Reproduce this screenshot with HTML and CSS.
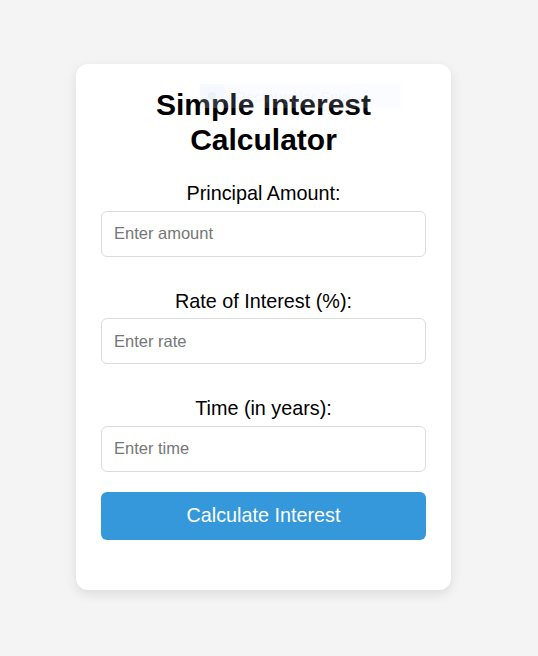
FILE: index.html
```html
<!DOCTYPE html>
<html lang="en">
<head>
<meta charset="utf-8">
<title>Simple Interest Calculator</title>
<link rel="stylesheet" href="styles.css">
</head>
<body>
<div class="page">
  <div class="card">
    <h1 class="title">Simple Interest Calculator</h1>
    <div class="group">
      <label class="label" for="p">Principal Amount:</label>
      <input class="field" id="p" type="number" placeholder="Enter amount">
    </div>
    <div class="group">
      <label class="label" for="r">Rate of Interest (%):</label>
      <input class="field" id="r" type="number" placeholder="Enter rate">
    </div>
    <div class="group">
      <label class="label" for="t">Time (in years):</label>
      <input class="field" id="t" type="number" placeholder="Enter time">
    </div>
    <button class="btn" type="button">Calculate Interest</button>
  </div>
  <div class="snip"><span class="snip-icon"><span class="snip-dot"></span></span><span class="snip-text">Rectangular Snip</span></div>
</div>
</body>
</html>
```
FILE: styles.css
```css
html, body {
  margin: 0;
  padding: 0;
}
body {
  background: #f4f4f4;
  font-family: "Liberation Sans", Arial, sans-serif;
  color: #000;
}
.page {
  position: relative;
  padding: 64px 0 0 76px;
  min-height: 592px;
}
.card {
  width: 375px;
  box-sizing: border-box;
  padding: 23px 25px 50px;
  background: #fff;
  border-radius: 12px;
  box-shadow: 0 4px 12px rgba(0, 0, 0, 0.1);
}
.title {
  margin: 0 0 25px;
  font-size: 30px;
  line-height: 35px;
  font-weight: bold;
  text-align: center;
}
.group {
  margin-bottom: 33px;
}
.group:nth-of-type(3) {
  margin-bottom: 20px;
}
.label {
  display: block;
  font-size: 19.8px;
  line-height: 23px;
  text-align: center;
  margin-bottom: 5.5px;
}
.field {
  display: block;
  width: 100%;
  height: 46px;
  box-sizing: border-box;
  padding: 0 12px;
  border: 1px solid #dcdcdc;
  border-radius: 6px;
  font-family: "Liberation Sans", Arial, sans-serif;
  font-size: 16.5px;
  color: #000;
  background: #fff;
  outline: none;
}
.field::placeholder {
  color: #767676;
}
.btn {
  display: block;
  width: 100%;
  box-sizing: border-box;
  padding: 12px 0 12.5px;
  line-height: 23.5px;
  border: none;
  border-radius: 6px;
  background: #3498db;
  color: #fff;
  font-family: "Liberation Sans", Arial, sans-serif;
  font-size: 19.8px;
}
.snip {
  position: absolute;
  left: 200px;
  top: 84px;
  width: 201px;
  height: 24px;
  display: flex;
  align-items: center;
  background: rgba(225, 236, 255, 0.15);
  pointer-events: none;
}
.snip-icon {
  width: 24px;
  height: 24px;
  display: flex;
  align-items: center;
  justify-content: center;
  background: rgba(200, 215, 240, 0.1);
}
.snip-dot {
  width: 8px;
  height: 8px;
  border-radius: 50%;
  background: rgba(180, 190, 210, 0.15);
}
.snip-text {
  margin-left: 11px;
  font-family: "Segoe UI", "Liberation Sans", sans-serif;
  font-size: 15px;
  color: rgba(190, 200, 225, 0.14);
}
```
